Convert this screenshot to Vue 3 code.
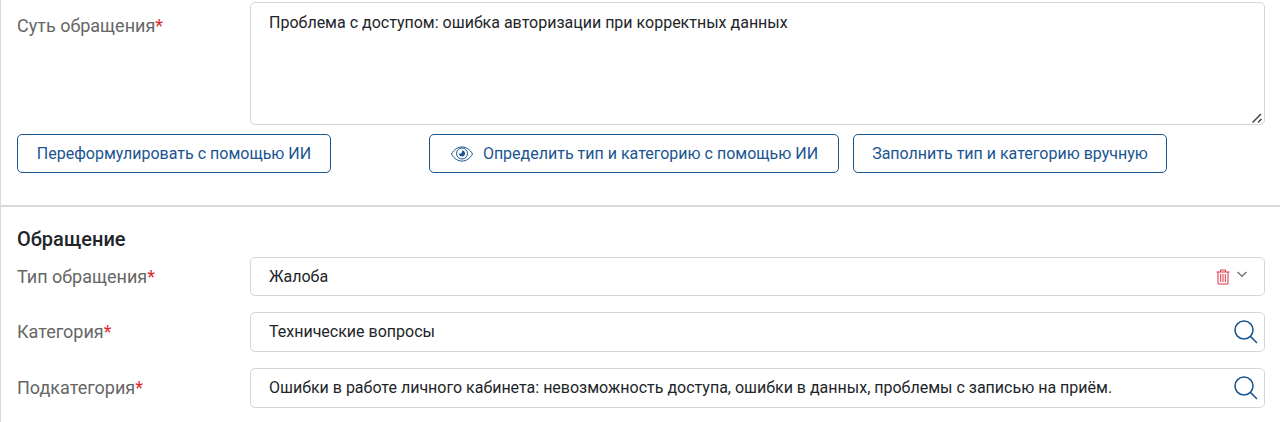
<script setup>
import { ref } from 'vue'

const summary = ref('Проблема с доступом: ошибка авторизации при корректных данных')
const type = ref('Жалоба')
const lookups = ref([
  { id: 'category', label: 'Категория', value: 'Технические вопросы' },
  {
    id: 'subcategory',
    label: 'Подкатегория',
    value: 'Ошибки в работе личного кабинета: невозможность доступа, ошибки в данных, проблемы с записью на приём.',
  },
])
</script>

<template>
  <form class="form" @submit.prevent>
    <section class="panel summary">
      <div class="row row-top">
        <label class="label" for="summary">Суть обращения<span class="required">*</span></label>
        <div class="box area">
          <textarea id="summary" v-model="summary" class="control"></textarea>
          <svg class="grip" width="12" height="12" viewBox="0 0 12 12" aria-hidden="true">
            <path d="M1.5 10.5L10 2M7 10.5L10.5 7" />
          </svg>
        </div>
      </div>
      <div class="actions">
        <div class="action-side">
          <button type="button" class="button">Переформулировать с помощью ИИ</button>
        </div>
        <div class="action-main">
          <button type="button" class="button wide">
            <svg class="eye" width="24" height="18" viewBox="0 0 24 18" aria-hidden="true">
              <path d="M1.5 9C6.5-.4 17.5-.4 22.5 9C17.5 18.4 6.5 18.4 1.5 9Z" />
              <circle cx="12" cy="8.5" r="5.5" />
              <path class="pupil" d="M12 5.5A3 3 0 1 1 9 8.5C10.8 9.2 12.6 7.6 12 5.5Z" />
            </svg>
            Определить тип и категорию с помощью ИИ
          </button>
          <button type="button" class="button">Заполнить тип и категорию вручную</button>
        </div>
      </div>
    </section>

    <section class="panel details">
      <h2 class="title">Обращение</h2>
      <div class="row">
        <label class="label" for="type">Тип обращения<span class="required">*</span></label>
        <div class="box">
          <select id="type" v-model="type" class="control">
            <option>Жалоба</option>
          </select>
          <button type="button" class="icon" aria-label="Очистить" @click="type = ''">
            <svg class="trash" width="14" height="16" viewBox="0 0 14 16" aria-hidden="true">
              <path d="M.5 3H13.5M4.5 3V1H9.5V3M2 3V15H12V3M4.7 5V13M7 5V13M9.3 5V13" />
            </svg>
          </button>
          <svg class="chevron" width="12" height="12" viewBox="0 0 12 12" aria-hidden="true">
            <path d="M1.5 1L6 5.3L10.5 1" />
          </svg>
        </div>
      </div>
      <div v-for="item in lookups" :key="item.id" class="row">
        <label class="label" :for="item.id">{{ item.label }}<span class="required">*</span></label>
        <div class="box lookup">
          <input :id="item.id" v-model="item.value" type="text" class="control" />
          <button type="button" class="icon" aria-label="Найти">
            <svg class="search" width="24" height="24" viewBox="0 0 24 24" aria-hidden="true">
              <circle cx="10" cy="10" r="9" />
              <path d="M16.4 16.4L23 23" />
            </svg>
          </button>
        </div>
      </div>
    </section>
  </form>
</template>

<style>
body {
  background: #fff;
}
</style>

<style scoped>
.form,
.form * {
  box-sizing: border-box;
}

.form {
  font-family: Roboto, "Liberation Sans", sans-serif;
  font-size: 16px;
  line-height: 24px;
  color: #212529;
}

.panel {
  border-left: 1px solid #d9d9d9;
  padding: 0 15px 0 16px;
}

.summary {
  border-bottom: 1px solid #d9d9d9;
  padding-top: 2px;
  padding-bottom: 32px;
}

.details {
  border-top: 1px solid #d9d9d9;
  padding-top: 20px;
  padding-bottom: 14px;
}

.row {
  display: grid;
  grid-template-columns: 233px minmax(0, 1fr);
  align-items: center;
}

.row + .row {
  margin-top: 16px;
}

.row-top {
  align-items: start;
}

.row-top .label {
  padding-top: 12px;
}

.label {
  font-size: 18px;
  color: #666;
}

.required {
  color: #e02b2b;
}

.box {
  display: flex;
  align-items: center;
  height: 39px;
  padding: 0 16px 0 18px;
  border: 1px solid #d5d5d5;
  border-radius: 5px;
}

.lookup {
  height: 40px;
  padding-right: 6px;
}

.area {
  position: relative;
  height: 123px;
  padding: 0;
}

.control {
  flex: 1;
  min-width: 0;
  padding: 0;
  border: 0;
  outline: 0;
  appearance: none;
  background: transparent;
  font: inherit;
  color: inherit;
}

textarea.control {
  height: 100%;
  padding: 8px 18px;
  resize: none;
}

svg {
  flex: none;
  fill: none;
  stroke: currentColor;
}

.grip {
  position: absolute;
  right: 1px;
  bottom: 0;
  color: #444;
  stroke-width: 1.5;
}

.actions {
  display: grid;
  grid-template-columns: 412px minmax(0, 1fr);
  margin-top: 9px;
}

.action-main {
  display: flex;
  gap: 14px;
}

.button {
  display: inline-flex;
  align-items: center;
  justify-content: center;
  width: 314px;
  height: 39px;
  padding: 0;
  border: 1px solid #1a5590;
  border-radius: 5px;
  background: #fff;
  font: inherit;
  color: #1a5590;
  white-space: nowrap;
}

.wide {
  gap: 9px;
  width: 410px;
}

.pupil {
  fill: currentColor;
  stroke: none;
}

.title {
  margin: 0 0 6px;
  font-size: 20px;
  font-weight: 500;
  line-height: 24px;
}

.icon {
  display: flex;
  padding: 0;
  border: 0;
  background: transparent;
  color: #1a5590;
}

.trash {
  color: #dc3545;
}

.chevron {
  margin-left: 6px;
  color: #777;
  stroke-width: 1.5;
}

.search {
  stroke-width: 1.5;
}
</style>
